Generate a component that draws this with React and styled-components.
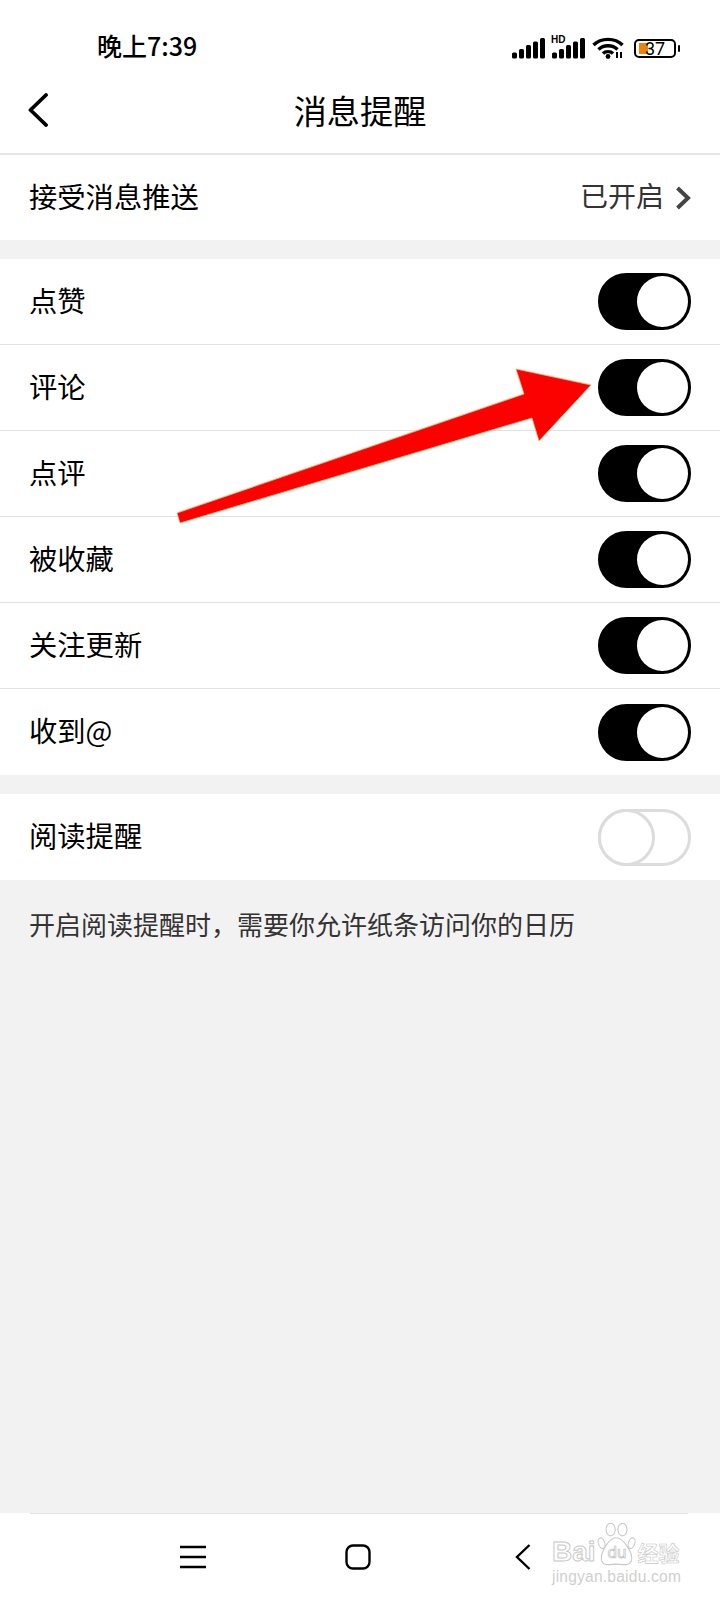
import React from "react";
import styled, { createGlobalStyle } from "styled-components";

const GlobalStyle = createGlobalStyle`
  html, body {
    margin: 0;
    padding: 0;
    background: #f2f2f2;
    font-family: "Noto Sans CJK SC", "Noto Sans", sans-serif;
  }
`;

const switches = [
  { label: "点赞" },
  { label: "评论" },
  { label: "点评" },
  { label: "被收藏" },
  { label: "关注更新" },
  { label: "收到@" },
];

const SignalBars = () => (
  <svg width="33" height="21" viewBox="0 0 33 21">
    <rect x="0" y="14.5" width="5" height="6" rx="1.5" />
    <rect x="7" y="11" width="5" height="9.5" rx="1.5" />
    <rect x="14" y="7" width="5" height="13.5" rx="1.5" />
    <rect x="21" y="3.5" width="5" height="17" rx="1.5" />
    <rect x="28" y="0" width="5" height="20.5" rx="1.5" />
  </svg>
);

const WifiIcon = () => (
  <svg width="32" height="22" viewBox="0 0 32 22" fill="none" stroke="#000" strokeWidth="3.4">
    <path d="M1.5 8 C9 0.5 23 0.5 30.5 8" />
    <path d="M6.5 12.5 C11.5 7.5 20.5 7.5 25.5 12.5" />
    <path d="M11 16.5 C13.5 14 18.5 14 21 16.5" />
    <circle cx="16" cy="19.5" r="2.4" fill="#000" stroke="none" />
    <path d="M25 15 v6 M29 15 v6" strokeWidth="2" />
  </svg>
);

const App = () => (
  <Page>
    <GlobalStyle />
    <StatusBar>
      <StatusTime>晚上7:39</StatusTime>
      <StatusIcons>
        <SignalBars />
        <HdSignal>
          <HdLabel>HD</HdLabel>
          <SignalBars />
        </HdSignal>
        <WifiIcon />
        <Battery>
          <BatteryFill />
          <BatteryLevel>37</BatteryLevel>
        </Battery>
      </StatusIcons>
    </StatusBar>

    <NavBar>
      <BackButton>
        <svg width="20" height="34" viewBox="0 0 20 34" fill="none" stroke="#000" strokeWidth="3.8" strokeLinecap="round" strokeLinejoin="round">
          <path d="M18 2 L2.5 17 L18 32" />
        </svg>
      </BackButton>
      <NavTitle>消息提醒</NavTitle>
    </NavBar>

    <Group>
      <Row $compact>
        <RowLabel>接受消息推送</RowLabel>
        <RowValue>
          已开启
          <svg width="16" height="24" viewBox="0 0 16 24" fill="none" stroke="#444" strokeWidth="4" strokeLinejoin="miter">
            <path d="M2.5 2 L13 12 L2.5 22" />
          </svg>
        </RowValue>
      </Row>
    </Group>

    <Group>
      {switches.map((item) => (
        <Row key={item.label}>
          <RowLabel>{item.label}</RowLabel>
          <Toggle $on>
            <Knob $on />
          </Toggle>
        </Row>
      ))}
    </Group>

    <Group>
      <Row>
        <RowLabel>阅读提醒</RowLabel>
        <Toggle>
          <Knob />
        </Toggle>
      </Row>
    </Group>

    <Note>开启阅读提醒时，需要你允许纸条访问你的日历</Note>

    <Footer>
      <FooterIcons>
        <FooterIcon>
          <svg width="26" height="24" viewBox="0 0 26 24" fill="none" stroke="#000" strokeWidth="2.4">
            <path d="M0 2 H26 M0 12 H26 M0 22 H26" />
          </svg>
        </FooterIcon>
        <FooterIcon>
          <svg width="26" height="26" viewBox="0 0 26 26" fill="none" stroke="#000" strokeWidth="2.4">
            <rect x="1.5" y="1.5" width="23" height="23" rx="6.5" />
          </svg>
        </FooterIcon>
        <FooterIcon>
          <svg width="16" height="26" viewBox="0 0 16 26" fill="none" stroke="#000" strokeWidth="2.4">
            <path d="M14.5 1 L2 13 L14.5 25" />
          </svg>
        </FooterIcon>
      </FooterIcons>
    </Footer>

    <Arrow width="720" height="600" viewBox="0 0 720 600">
      <polygon
        points="177,513 524,394 516,369 591,385 539,441 532,418 180,523"
        fill="#fb0200"
        stroke="#f7b36a"
        strokeWidth="0.8"
      />
    </Arrow>

    <Watermark>
      <WatermarkBrand>
        <WatermarkLatin>Bai</WatermarkLatin>
        <Paw>
          <svg width="40" height="48" viewBox="0 0 44 50" fill="#fff" stroke="#c8c8c8" strokeWidth="1.2">
            <ellipse cx="5" cy="23" rx="3.5" ry="6" transform="rotate(-18 5 23)" />
            <ellipse cx="15" cy="8" rx="5" ry="7" />
            <ellipse cx="28" cy="8" rx="5" ry="7" />
            <ellipse cx="38" cy="23" rx="3.5" ry="6" transform="rotate(18 38 23)" />
            <path d="M21 17 C29 17 40 34 38 42 C36 49 27 46 21 46 C15 46 7 49 5 42 C3 34 13 17 21 17 Z" />
          </svg>
          <PawText>du</PawText>
        </Paw>
        <WatermarkCn>经验</WatermarkCn>
      </WatermarkBrand>
      <WatermarkUrl>jingyan.baidu.com</WatermarkUrl>
    </Watermark>
  </Page>
);

export default App;

const Page = styled.div`
  position: relative;
  display: flex;
  flex-direction: column;
  width: 720px;
  height: 1600px;
  overflow: hidden;
  background: #f2f2f2;
`;

const StatusBar = styled.div`
  display: flex;
  justify-content: space-between;
  align-items: center;
  height: 66px;
  padding: 28px 40px 0 97px;
  box-sizing: border-box;
  background: #fff;
`;

const StatusTime = styled.div`
  font-size: 25px;
  line-height: 36px;
  font-weight: 500;
  color: #000;
  margin-top: -4px;
`;

const StatusIcons = styled.div`
  display: flex;
  align-items: flex-end;
  gap: 7px;
  margin-top: 1px;
`;

const HdSignal = styled.div`
  position: relative;
  display: flex;
`;

const HdLabel = styled.span`
  position: absolute;
  left: -1px;
  top: -3px;
  font-family: "Liberation Sans", sans-serif;
  font-size: 10px;
  line-height: 10px;
  font-weight: 700;
  color: #000;
  background: #fff;
  padding-right: 1px;
`;

const Battery = styled.div`
  position: relative;
  display: flex;
  align-items: center;
  width: 42px;
  height: 19px;
  margin: 0 4px 1px 3px;
  box-sizing: border-box;
  border: 2px solid #000;
  border-radius: 5px;

  &::after {
    content: "";
    position: absolute;
    right: -6px;
    top: 4px;
    width: 2px;
    height: 7px;
    background: #000;
    border-radius: 1px;
  }
`;

const BatteryFill = styled.span`
  width: 9px;
  height: 11px;
  margin-left: 3px;
  background: #ee8207;
`;

const BatteryLevel = styled.span`
  position: absolute;
  left: 9px;
  top: -2px;
  font-family: "Roboto", sans-serif;
  font-size: 18px;
  line-height: 19px;
  color: #000;
`;

const NavBar = styled.div`
  display: grid;
  grid-template-columns: 1fr auto 1fr;
  align-items: center;
  height: 89px;
  padding: 0 28px;
  box-sizing: border-box;
  background: #fff;
  border-bottom: 2px solid #e6e6e6;
`;

const BackButton = styled.div`
  display: flex;
  align-items: center;
  height: 34px;
`;

const NavTitle = styled.div`
  font-size: 33.2px;
  line-height: 44px;
  color: #000;
`;

const Group = styled.div`
  background: #fff;
  margin-bottom: 19px;

  &:last-of-type {
    margin-bottom: 0;
  }
`;

const Row = styled.div`
  display: flex;
  justify-content: space-between;
  align-items: center;
  height: ${(p) => (p.$compact ? "85px" : "86px")};
  padding: 0 29px;
  box-sizing: border-box;
  border-bottom: 1px solid #e2e2e2;

  &:last-child {
    border-bottom: 0;
  }
`;

const RowLabel = styled.div`
  font-size: 28.3px;
  line-height: 40px;
  margin-top: -4px;
  color: #000;
`;

const RowValue = styled.div`
  display: flex;
  align-items: center;
  gap: 11px;
  font-size: 28px;
  line-height: 40px;
  margin-top: -6px;
  color: #333;

  svg {
    margin-top: 6px;
  }
`;

const Toggle = styled.div`
  display: flex;
  justify-content: ${(p) => (p.$on ? "flex-end" : "flex-start")};
  align-items: center;
  width: 93px;
  height: 57px;
  box-sizing: border-box;
  border-radius: 29px;
  background: ${(p) => (p.$on ? "#000" : "#fff")};
  border: ${(p) => (p.$on ? "3px solid #000" : "3px solid #dcdcdc")};
`;

const Knob = styled.span`
  flex: none;
  width: ${(p) => (p.$on ? "51px" : "57px")};
  height: ${(p) => (p.$on ? "51px" : "57px")};
  margin: ${(p) => (p.$on ? "0" : "-3px 0 -3px -3px")};
  box-sizing: border-box;
  border-radius: 50%;
  background: #fff;
  border: ${(p) => (p.$on ? "0" : "3px solid #dcdcdc")};
`;

const Note = styled.div`
  flex: 1;
  padding: 6px 29px 0;
  font-size: 26px;
  line-height: 38px;
  color: #333;
`;

const Footer = styled.div`
  height: 87px;
  background: #fff;
`;

const FooterIcons = styled.div`
  display: flex;
  justify-content: center;
  align-items: center;
  gap: 115px;
  height: 87px;
  margin: 0 32px 0 30px;
  padding-right: 2px;
  box-sizing: border-box;
  border-top: 1px solid #e4e4e4;
`;

const FooterIcon = styled.div`
  display: flex;
  justify-content: center;
  align-items: center;
  width: 50px;
  height: 30px;
`;

const Arrow = styled.svg`
  position: absolute;
  left: 0;
  top: 0;
  pointer-events: none;
`;

const Watermark = styled.div`
  position: absolute;
  left: 552px;
  top: 1521px;
  width: 130px;
`;

const WatermarkBrand = styled.div`
  display: flex;
  align-items: flex-start;
  height: 47px;
  color: #fff;
  font-weight: 700;
`;

const WatermarkLatin = styled.span`
  margin-top: 17px;
  font-family: "Liberation Sans", sans-serif;
  font-size: 28px;
  line-height: 28px;
  -webkit-text-stroke: 1px #c8c8c8;
`;

const Paw = styled.div`
  position: relative;
  flex: none;
  width: 40px;
  height: 48px;
  margin-left: 1px;
`;

const PawText = styled.span`
  position: absolute;
  left: 11px;
  top: 23px;
  font-family: "Liberation Sans", sans-serif;
  font-size: 17px;
  line-height: 18px;
  font-weight: 400;
  -webkit-text-stroke: 0.7px #c0c0c0;
`;

const WatermarkCn = styled.span`
  margin: 18px 0 0 1px;
  font-size: 21px;
  line-height: 26px;
  white-space: nowrap;
  -webkit-text-stroke: 0.6px #c8c8c8;
`;

const WatermarkUrl = styled.div`
  font-family: "Liberation Sans", sans-serif;
  font-size: 15.6px;
  line-height: 18px;
  letter-spacing: 0.2px;
  white-space: nowrap;
  color: #d0d0d0;
`;
